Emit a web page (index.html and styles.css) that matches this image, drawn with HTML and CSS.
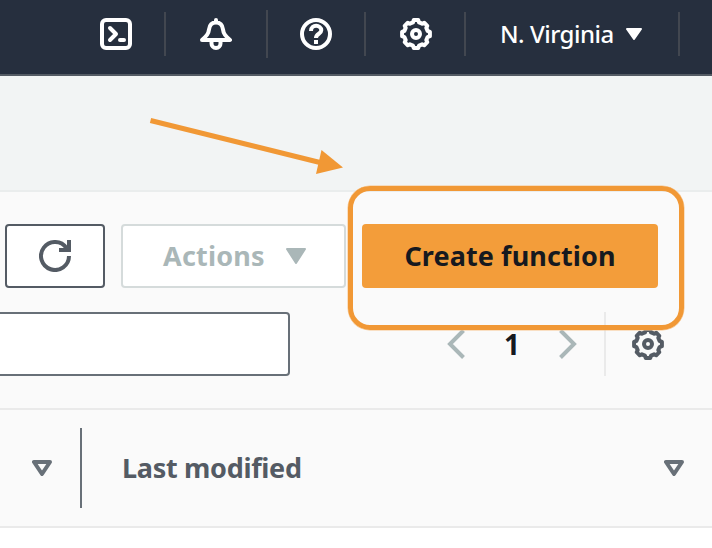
FILE: index.html
```html
<!DOCTYPE html>
<html lang="en">
<head>
<meta charset="utf-8">
<title>Functions</title>
<link rel="stylesheet" href="styles.css">
</head>
<body>
<svg class="defs" aria-hidden="true">
  <symbol id="gear" viewBox="-16 -16 32 32">
    <path d="M-2.2-13.9H2.2L3.1-11.6L6.1-10.3L8.2-11.3L11.3-8.2L10.3-6.1L11.6-3.1L13.9-2.2V2.2L11.6 3.1L10.3 6.1L11.3 8.2L8.2 11.3L6.1 10.3L3.1 11.6L2.2 13.9H-2.2L-3.1 11.6L-6.1 10.3L-8.2 11.3L-11.3 8.2L-10.3 6.1L-11.6 3.1L-13.9 2.2V-2.2L-11.6-3.1L-10.3-6.1L-11.3-8.2L-8.2-11.3L-6.1-10.3L-3.1-11.6Z"/>
    <circle r="4"/>
  </symbol>
  <symbol id="sort" viewBox="0 0 20 16">
    <path d="M2 2H18L10 14Z"/>
  </symbol>
</svg>
<header class="topbar">
  <div class="cell shell"><svg class="icon" viewBox="0 0 32 32"><rect x="2" y="2" width="28" height="28" rx="4"/><path d="M10 10L16 16L10 22M20 22H24"/></svg></div>
  <div class="cell bell"><svg class="icon" viewBox="0 0 32 32"><path d="M16 2V4M2 22C6.500 18 8.500 16 9 11.500C9.500 7 12 4.500 16 4.500S22.500 7 23 11.500C23.500 16 25.500 18 30 22Z"/><path d="M11.500 23V25.500A4.500 4.500 0 0 0 20.500 25.500V23"/></svg></div>
  <div class="cell help"><svg class="icon" viewBox="0 0 32 32"><circle cx="16" cy="16" r="14"/><path class="butt" d="M11 13C11 6 21.300 6.500 21.300 12.300C21.300 16 16 15.500 16 20M16 22V26"/></svg></div>
  <div class="cell settings"><svg class="icon"><use href="#gear"/></svg></div>
  <div class="cell region"><span class="region-name">N. Virginia</span><svg class="caret" viewBox="0 0 16 12"><path d="M1 1H15L8 11Z"/></svg></div>
</header>
<section class="banner"></section>
<main class="panel">
  <div class="actions">
    <button class="btn refresh" aria-label="Refresh"><svg class="icon" viewBox="0 0 32 32"><path d="M30 16A14 14 0 1 1 27.500 8L29.500 10M30 0V10H20"/></svg></button>
    <button class="btn menu" disabled><span class="menu-label">Actions</span><svg class="drop" viewBox="0 0 20 16"><path d="M1 1H19L10 15Z"/></svg></button>
    <div class="primary-wrap">
      <button class="btn primary"><span class="primary-label">Create function</span></button>
      <div class="highlight"></div>
    </div>
  </div>
  <div class="filters">
    <input class="search" aria-label="Filter">
    <svg class="chevron prev" viewBox="0 0 20 32"><path d="M17.500 2.500L4 16L17.500 29.500"/></svg>
    <span class="page">1</span>
    <svg class="chevron next" viewBox="0 0 20 32"><path d="M2.500 2.500L16 16L2.500 29.500"/></svg>
    <div class="prefs"><svg class="icon"><use href="#gear"/></svg></div>
  </div>
  <div class="thead">
    <svg class="sort"><use href="#sort"/></svg>
    <div class="column"><span class="column-name">Last modified</span><svg class="sort"><use href="#sort"/></svg></div>
  </div>
</main>
<svg class="arrow" viewBox="0 0 200 60"><path class="shaft" d="M6.500 4.500L176 46.500"/><path class="head" d="M177.500 34L199 51.500L172 58Z"/></svg>
</body>
</html>
```
FILE: styles.css
```css
* { box-sizing: border-box; }
body {
  position: relative;
  width: 712px;
  height: 548px;
  margin: 0;
  overflow: hidden;
  background: #fff;
  font-family: "Noto Sans", "Open Sans", sans-serif;
}
button, input { margin: 0; font: inherit; }
svg { display: block; flex: none; }
.defs { position: absolute; width: 0; height: 0; }
.icon {
  width: 32px;
  height: 32px;
  fill: none;
  stroke: currentColor;
  stroke-width: 4;
  stroke-linejoin: round;
  stroke-linecap: round;
}
.butt { stroke-linecap: butt; }
.topbar {
  display: flex;
  height: 76px;
  padding-top: 12px;
  border-bottom: 2px solid #545b64;
  background: #262f3e;
  color: #fff;
}
.cell {
  display: flex;
  align-items: center;
  height: 44px;
  padding-left: 34px;
  border-right: 2px solid #424750;
}
.shell { width: 166px; padding-left: 100px; }
.bell { width: 102px; height: 48px; margin-top: -2px; }
.help { width: 98px; padding-left: 32px; }
.settings { width: 100px; }
.region { width: 214px; }
.region-name {
  width: 126px;
  font-size: 24px;
  font-weight: 500;
  line-height: 44px;
  letter-spacing: -0.5px;
  white-space: nowrap;
}
.caret { width: 16px; height: 12px; }
.caret path, .drop path {
  fill: currentColor;
  stroke: currentColor;
  stroke-width: 2;
  stroke-linejoin: round;
}
.banner { height: 116px; border-bottom: 2px solid #eaeded; background: #f2f4f4; }
.panel { height: 336px; border-bottom: 2px solid #eaeaea; background: #fafafa; }
.actions { display: flex; padding: 32px 0 0 5px; }
.btn {
  display: flex;
  align-items: center;
  justify-content: center;
  height: 64px;
  padding: 0;
  border: 2px solid #545b64;
  border-radius: 4px;
  background: #fff;
  color: #545b64;
  font-size: 27px;
  font-weight: 700;
  white-space: nowrap;
}
.refresh { width: 100px; margin-right: 16px; }
.refresh .icon { stroke-linecap: butt; stroke-linejoin: miter; }
.menu {
  justify-content: flex-start;
  width: 225px;
  margin-right: 16px;
  padding-left: 40px;
  border-color: #d5dbdb;
  color: #aab7b8;
}
.menu-label { width: 123px; padding-bottom: 2px; text-align: left; letter-spacing: 0.2px; }
.drop { width: 20px; height: 16px; }
.primary-wrap { position: relative; }
.primary { width: 296px; border: 0; background: #f39d3a; color: #16191f; }
.primary-label { padding-bottom: 2px; letter-spacing: 0.1px; }
.highlight {
  position: absolute;
  top: -38px;
  left: -14px;
  width: 336px;
  height: 144px;
  border: 5px solid #f19835;
  border-radius: 22px;
  box-shadow: 0 0 0 0.5px #f7c48b;
}
.filters { display: flex; align-items: center; height: 64px; margin: 24px 0 32px; }
.search {
  width: 290px;
  height: 64px;
  padding: 0 16px;
  border: 2px solid #687078;
  border-left: 0;
  border-radius: 0 4px 4px 0;
  background: #fff;
}
.chevron { width: 20px; height: 32px; fill: none; stroke: #aab7b8; stroke-width: 4; }
.prev { margin-left: 156px; }
.page {
  width: 92px;
  color: #16191f;
  font-size: 28px;
  font-weight: 700;
  text-align: center;
}
.prefs {
  display: flex;
  align-items: center;
  height: 64px;
  margin-left: 26px;
  padding-left: 26px;
  border-left: 2px solid #eaeaea;
  color: #545b64;
}
.thead {
  display: flex;
  align-items: center;
  height: 118px;
  padding-left: 32px;
  border-top: 2px solid #eaeaea;
}
.sort { width: 20px; height: 16px; fill: none; stroke: #687078; stroke-width: 4; stroke-linejoin: round; }
.column {
  display: flex;
  flex: 1;
  align-items: center;
  justify-content: space-between;
  height: 80px;
  margin-left: 28px;
  padding: 0 28px 0 40px;
  border-left: 2px solid #687078;
}
.column-name {
  padding-bottom: 2px;
  color: #545b64;
  font-size: 27px;
  font-weight: 700;
  letter-spacing: -0.3px;
}
.arrow { position: absolute; top: 116px; left: 144px; width: 200px; height: 60px; }
.shaft { fill: none; stroke: #f19835; stroke-width: 5; }
.head { fill: #f19835; }
```
